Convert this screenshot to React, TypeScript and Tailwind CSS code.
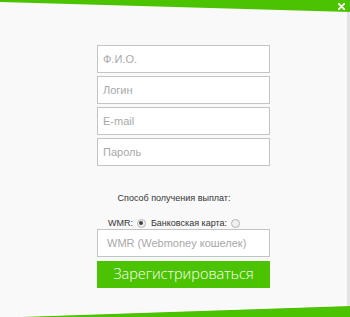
const fields = ["Ф.И.О.", "Логин", "E-mail", "Пароль"];

function Field({ placeholder }: { placeholder: string }) {
  return (
    <input
      type="text"
      placeholder={placeholder}
      className="block w-[173px] h-[28px] border border-[#c4c4c4] bg-white px-[5px] text-[11px] text-[#555] placeholder:text-[#a8a8a8] outline-none"
    />
  );
}

function Radio({ checked }: { checked?: boolean }) {
  return (
    <span className="inline-flex w-[9px] h-[9px] rounded-full border border-[#b5b5b5] bg-[#f0f0f0] items-center justify-center">
      {checked && <span className="w-[4px] h-[4px] rounded-full bg-[#444]" />}
    </span>
  );
}

export default function App() {
  return (
    <div
      className="relative w-[350px] h-[317px] overflow-hidden bg-[#f9f9f9]"
      style={{ fontFamily: '"Liberation Sans", Arial, sans-serif' }}
    >
      {/* decorative bands */}
      <svg className="absolute inset-0 pointer-events-none" width="350" height="317">
        <polygon points="0,0 350,0 350,12 0,2" fill="#4cc300" />
        <polygon points="20,317 350,306 350,317" fill="#4cc300" />
        <line x1="20" y1="316" x2="350" y2="305" stroke="#ffffff" strokeWidth="1" />
      </svg>
      <div className="absolute right-0 top-[12px] bottom-[11px] w-[3px] bg-[#e4e4e4]" />
      <button className="absolute right-[5px] top-[3px] w-[7px] h-[7px]" aria-label="Закрыть">
        <svg width="7" height="7" viewBox="0 0 7 7">
          <path d="M0.8 0.8 L6.2 6.2 M6.2 0.8 L0.8 6.2" stroke="#fff" strokeWidth="1.8" strokeLinecap="round" />
        </svg>
      </button>

      <div className="pt-[45px]">
        <div className="ml-[97px] flex flex-col gap-[3px]">
          {fields.map((f) => (
            <Field key={f} placeholder={f} />
          ))}
        </div>

        <div className="w-[348px] text-center text-[9px] text-[#333] mt-[26px] leading-[12px]">
          Способ получения выплат:
        </div>

        <div className="w-[348px] flex items-center justify-center gap-[4px] mt-[13px] text-[9px] text-[#333] leading-[12px]">
          <span>WMR:</span>
          <Radio checked />
          <span className="ml-[1px]">Банковская карта:</span>
          <Radio />
        </div>

        <div className="ml-[97px] mt-0 flex flex-col gap-[4px]">
          <input
            type="text"
            placeholder="WMR (Webmoney кошелек)"
            className="block w-[173px] h-[28px] border border-[#c4c4c4] bg-white px-[9px] text-[11px] placeholder:text-[#a8a8a8] outline-none"
          />
          <button
            className="w-[173px] h-[27px] bg-[#4cc300] text-white text-[14.5px] font-light leading-none"
            style={{ fontFamily: '"Open Sans", sans-serif' }}
          >
            Зарегистрироваться
          </button>
        </div>
      </div>
    </div>
  );
}
